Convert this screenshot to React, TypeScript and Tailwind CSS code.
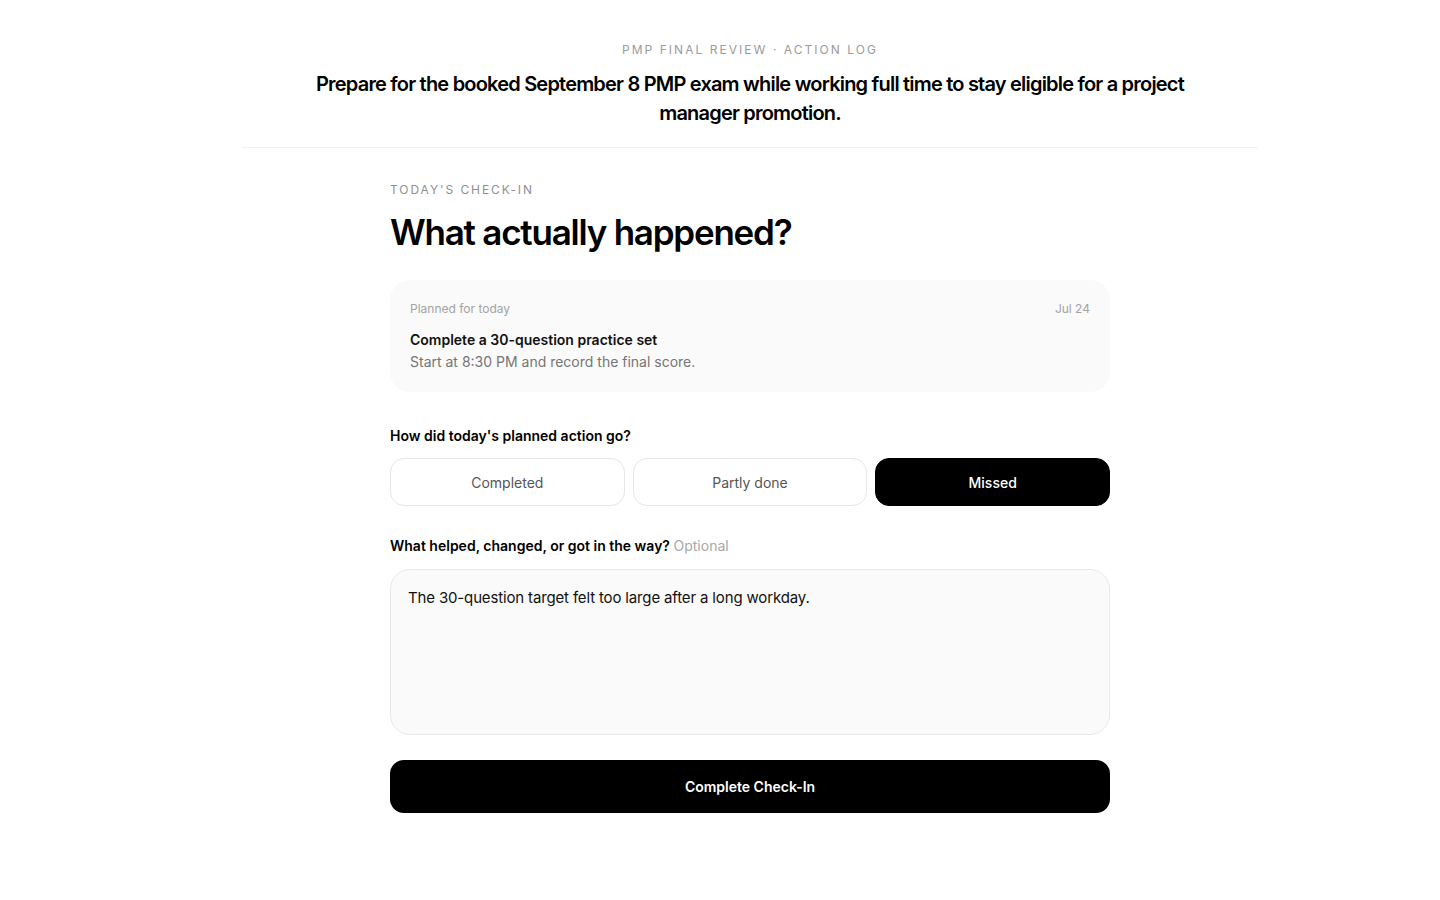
import * as React from 'react'

const statuses = ['Completed', 'Partly done', 'Missed'] as const

export default function App() {
	const [status, setStatus] = React.useState<string>('Missed')
	const [note, setNote] = React.useState(
		'The 30-question target felt too large after a long workday.'
	)

	return (
		<div
			className="min-h-screen bg-white text-black pl-[60px]"
			style={{ fontFamily: 'Inter, "Noto Sans", sans-serif' }}
		>
			<header className="mx-auto max-w-[1016px] border-b border-[#f2f2f2] pt-[42px] pb-[19px] text-center">
				<p className="text-[12px] leading-4 tracking-[0.17em] text-[#9b9b9b] uppercase">
					PMP Final Review · Action Log
				</p>
				<h1 className="mx-auto mt-3 max-w-[880px] text-[20px] font-semibold leading-[29px] tracking-[-0.04em]">
					Prepare for the booked September 8 PMP exam while working full time to
					stay eligible for a project manager promotion.
				</h1>
			</header>

			<main className="mx-auto max-w-[720px] pt-[34px] pb-20">
				<p className="text-[12px] leading-4 tracking-[0.16em] text-[#8f8f8f] uppercase">
					Today's check-in
				</p>
				<h2 className="mt-[12px] text-[35px] font-semibold leading-[44px] tracking-[-0.035em]">
					What actually happened?
				</h2>

				<section className="mt-[26px] rounded-[20px] bg-[#fafafa] px-5 pt-[21px] pb-[20px]">
					<div className="flex items-center justify-between text-[12px] leading-4 text-[#a3a3a3]">
						<span>Planned for today</span>
						<span>Jul 24</span>
					</div>
					<p className="mt-[13px] text-[14px] font-semibold leading-5 text-[#111]">
						Complete a 30-question practice set
					</p>
					<p className="mt-[2px] text-[14px] leading-5 text-[#757575]">
						Start at 8:30 PM and record the final score.
					</p>
				</section>

				<p className="mt-[34px] text-[14px] font-semibold leading-5">
					How did today's planned action go?
				</p>
				<div className="mt-[12px] grid grid-cols-3 gap-2">
					{statuses.map((s) => (
						<button
							key={s}
							onClick={() => setStatus(s)}
							className={
								s === status
									? 'h-12 rounded-[14px] border border-black bg-black text-[14px] font-medium text-white'
									: 'h-12 rounded-[14px] border border-[#e6e6e6] bg-white text-[14px] text-[#555]'
							}
						>
							{s}
						</button>
					))}
				</div>

				<p className="mt-[30px] text-[14px] font-semibold leading-5">
					What helped, changed, or got in the way?{' '}
					<span className="font-normal text-[#a8a8a8]">Optional</span>
				</p>
				<textarea
					value={note}
					onChange={(e) => setNote(e.target.value)}
					className="mt-[13px] block h-[166px] w-full resize-none rounded-[20px] border border-[#e8e8e8] bg-[#fafafa] px-[17px] pt-[16px] pb-4 text-[15px] leading-6 tracking-[-0.01em] text-[#111] outline-none"
				/>

				<button className="mt-[25px] h-[53px] w-full rounded-[14px] bg-black text-[14px] font-semibold text-white">
					Complete Check-In
				</button>
			</main>
		</div>
	)
}
